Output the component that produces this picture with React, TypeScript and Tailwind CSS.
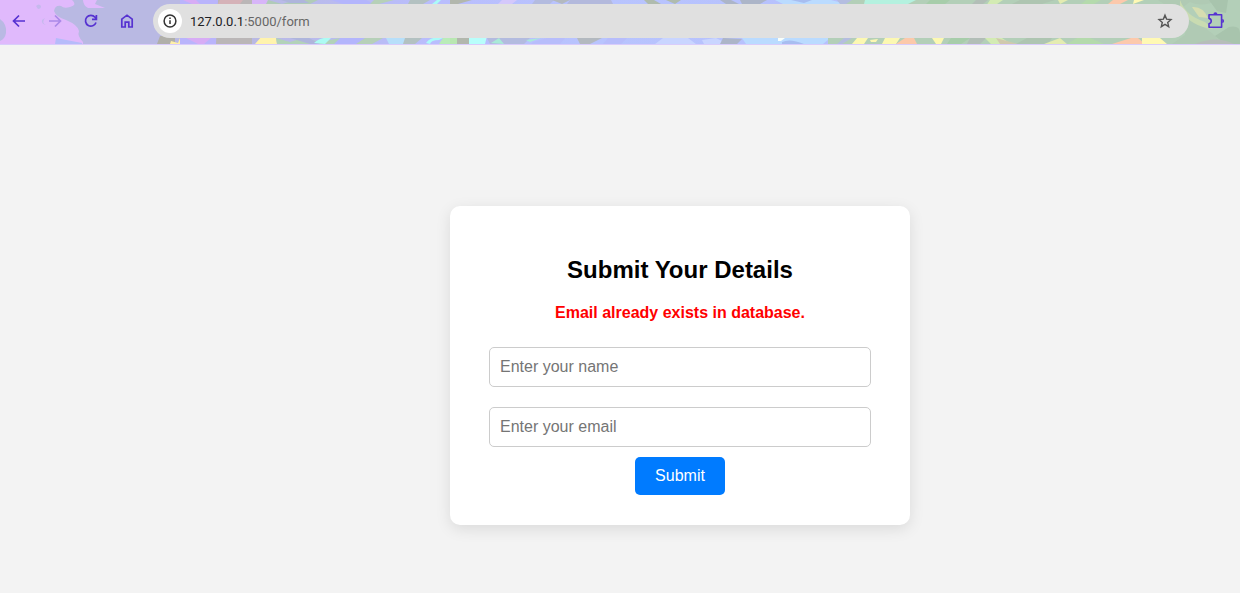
import React from "react";

type Shape = { d: string; fill: string };

// Shapes of the decorative toolbar theme, drawn on a 1240 x 44 canvas.
const themeShapes: Shape[] = [
  // lilac area on the left
  { d: "M0 0H72Q78 5 70 7Q64 9 61 6Q55 5 54 11Q56 17 66 20Q78 25 79 31Q77 36 83 42V44H0Z", fill: "#e0b9fc" },
  { d: "M0 19Q7 24 6 33Q5 39 0 41Z", fill: "#b9b9e3" },
  { d: "M56 38L82 43V44H55Z", fill: "#b6bbfa" },
  { d: "M36 6Q39 3 41 6Q41 9 38 9ZM45 18Q41 23 46 25Q41 24 42 20Z", fill: "#c6b9ed" },
  { d: "M83 0H97L95 4L105 8H88Q83 5 83 0Z", fill: "#e0b9fc" },
  // left part of the strips
  { d: "M160 36H175V44H157Z", fill: "#b0afa9" },
  { d: "M171 41L178 43L180 38V44H170Z", fill: "#fff0a8" },
  { d: "M180 0H218V4H180ZM180 38H220V44H180Z", fill: "#b9b4fb" },
  { d: "M183 0L192 4H200L196 0ZM186 38L198 44H204L211 38Z", fill: "#d7acf5" },
  { d: "M218 0H252V44H216Z", fill: "#bab6b7" },
  { d: "M220 0H243L240 4H218Z", fill: "#d5b2b8" },
  { d: "M252 0H268V4H252Z", fill: "#d7b5f8" },
  { d: "M262 36H276L277 44H255Z", fill: "#fff3ad" },
  { d: "M268 0L282 4L296 0H318L310 4H266Z", fill: "#b0cbb8" },
  { d: "M276 38L290 42L303 38L321 42L340 38V44H277Z", fill: "#b2d2b9" },
  { d: "M281 0L290 3H309L304 0ZM290 38L310 44H320L309 38Z", fill: "#aeb5dc" },
  { d: "M314 43Q320 37 331 38L325 44Z", fill: "#acfbf3" },
  { d: "M331 0L343 4H374L366 0ZM340 38H380L370 44H334Z", fill: "#b3b5fc" },
  { d: "M374 0H394L379 4H370ZM365 38H383L372 44H356Z", fill: "#b6d0b8" },
  { d: "M386 38H407L404 44H389Z", fill: "#b7dffa" },
  { d: "M410 0H430L423 4H408ZM405 38H422L415 44H403Z", fill: "#b3c1c1" },
  { d: "M437 0H441L437 4H432ZM426 43Q431 36 443 38L439 40Q431 40 430 44Z", fill: "#abfaf8" },
  { d: "M443 38H453L450 44H439Z", fill: "#b9ecb8" },
  // centre strips
  { d: "M450 38H457V44H450Z", fill: "#b9e7b2" },
  { d: "M450 0H472L458 4H450ZM457 38H469V44H457Z", fill: "#b2b7ad" },
  { d: "M469 36H487L485 44H469Z", fill: "#b8fefb" },
  { d: "M502 0H517L512 4H498Z", fill: "#d4c8fb" },
  { d: "M535 0H554L550 4H532ZM487 38H530L524 44H490Z", fill: "#b3bbdf" },
  { d: "M491 43L499 38L504 44ZM526 40L541 38L530 42Z", fill: "#a9ead8" },
  { d: "M552 0L562 4L570 0ZM577 38H602L590 44H580Z", fill: "#b3b9bf" },
  { d: "M570 0H611L613 4H567Z", fill: "#b3b9dc" },
  { d: "M644 0H654L661 4H648ZM666 0H681L675 4Z", fill: "#afbbae" },
  { d: "M533 42L547 38H565L560 44H531ZM603 44L608 38H627L621 44Z", fill: "#b7bdfb" },
  { d: "M663 38H688L696 44H655ZM702 40L716 38L728 44H704Z", fill: "#c9d5ff" },
  { d: "M720 0L726 4H739L731 0ZM740 0H767L760 4H742ZM723 38L742 39L737 44H720Z", fill: "#acb5c8" },
  // blue to green transition
  { d: "M775 0H831L846 4H783ZM742 38H830L823 44H746Z", fill: "#badbff" },
  { d: "M782 42Q790 38 804 44H782ZM791 0L804 3L812 0Z", fill: "#a7bdf0" },
  { d: "M778 38H785L781 41H778Z", fill: "#f9fffb" },
  { d: "M845 0H1240V44H828V4H844Z", fill: "#b3cfb8" },
  { d: "M865 0H916L908 4H864Z", fill: "#b4f1df" },
  { d: "M857 38H868L864 44H852ZM870 40L878 39L876 42H871ZM885 38H900L896 44H882ZM932 38H944L941 44H936Z", fill: "#fcf8b2" },
  { d: "M905 38H914L917 44H896Z", fill: "#fcc9aa" },
  { d: "M837 0H852L846 4H840ZM844 38H852L842 44H837Z", fill: "#b4bde0" },
  { d: "M930 0H950L945 4H926ZM951 38H970L961 44H947Z", fill: "#a7cdaa" },
  { d: "M976 0H988L983 4H972ZM970 38H986L980 44H967Z", fill: "#b2beb7" },
  // green area on the right
  { d: "M990 0H1003L994 6H986ZM985 38H1002L1011 44H991Z", fill: "#d3ebb3" },
  { d: "M996 38L1018 44H1000Z", fill: "#d0c9ad" },
  { d: "M1020 0H1055L1042 4H1012ZM1027 38H1052L1048 44H1016Z", fill: "#aec5b1" },
  { d: "M1058 0H1068L1060 4ZM1060 38L1044 44H1067Z", fill: "#e4ecb1" },
  { d: "M1113 0H1128L1120 4H1108ZM1131 38L1112 44H1145L1138 38Z", fill: "#fcc9ac" },
  { d: "M1134 0H1144L1133 4ZM1142 38H1160L1167 44H1142Z", fill: "#fff9b4" },
  { d: "M1086 0H1101L1094 4H1081ZM1077 38H1090L1104 44H1067Z", fill: "#b4daac" },
  { d: "M1158 0H1218Q1202 8 1190 2L1180 9L1164 4ZM1188 13Q1204 28 1213 34L1223 44H1172L1185 35Z", fill: "#b0cab4" },
  { d: "M1180 0Q1186 16 1205 22L1213 29Q1192 27 1180 10Z", fill: "#c9dbb1" },
  { d: "M1192 7Q1203 6 1208 18L1199 17Z", fill: "#d6ddb0" },
  { d: "M1209 0H1228L1226 13L1217 11ZM1229 27Q1240 25 1240 33V44H1225L1215 36Z", fill: "#a8c4ad" },
  { d: "M1195 44Q1217 35 1234 44Z", fill: "#b6bdb9" },
];

function ThemeBackdrop() {
  return (
    <svg aria-hidden="true" className="absolute inset-0 h-full w-full" viewBox="0 0 1240 44" preserveAspectRatio="none">
      <defs>
        <linearGradient id="theme-base" x1="0" x2="1">
          <stop offset="0" stopColor="#b9b9e3" />
          <stop offset="0.2" stopColor="#b9b9e3" />
          <stop offset="0.35" stopColor="#b9bdfd" />
          <stop offset="0.48" stopColor="#b8c4fe" />
          <stop offset="1" stopColor="#b4bbfa" />
        </linearGradient>
      </defs>
      <rect width="1240" height="44" fill="url(#theme-base)" />
      {themeShapes.map((shape, index) => (
        <path key={index} d={shape.d} fill={shape.fill} />
      ))}
    </svg>
  );
}

function Icon({ children }: { children: React.ReactNode }) {
  return (
    <svg aria-hidden="true" className="size-4" viewBox="0 0 16 16" fill="none" stroke="currentColor" strokeWidth="1.7">
      {children}
    </svg>
  );
}

const toolButton = "flex size-5 shrink-0 items-center justify-center text-[#5632d1]";

function BrowserBar() {
  return (
    <header className="relative flex h-[45px] items-center border-b border-[#d9ccfb] pb-[2px] pl-[9px] pr-[14px]">
      <ThemeBackdrop />
      <nav aria-label="Browser navigation" className="relative mr-4 flex items-center gap-4">
        <button type="button" aria-label="Back" className={toolButton}>
          <Icon><path d="M14 8H3M8 2.5L2.5 8L8 13.5" /></Icon>
        </button>
        <button type="button" aria-label="Forward" disabled className="flex size-5 shrink-0 items-center justify-center text-[#ab89e8]">
          <Icon><path d="M2 8H13M8 2.5L13.5 8L8 13.5" /></Icon>
        </button>
        <button type="button" aria-label="Reload" className={toolButton}>
          <Icon><path d="M13 9.5A5.4 5.4 0 1 1 12 4.2L13.6 6M13.4 2V6.4H9" /></Icon>
        </button>
        <button type="button" aria-label="Home" className={toolButton}>
          <Icon><path d="M2.8 6.2L8 2.2L13.2 6.2V14H9.8V9.2H6.2V14H2.8Z" /></Icon>
        </button>
      </nav>
      <div className="relative flex h-[34px] min-w-0 flex-1 items-center rounded-full bg-[#e0e0e0] pl-[5px] pr-4">
        <button type="button" aria-label="Site information" className="flex size-6 shrink-0 items-center justify-center rounded-full bg-white text-[#333333]">
          <svg aria-hidden="true" className="size-4" viewBox="0 0 16 16" fill="none" stroke="currentColor" strokeWidth="1.5">
            <circle cx="8" cy="8" r="5.9" />
            <path d="M8 7.2V11M8 4.6V6" />
          </svg>
        </button>
        <a href="http://127.0.0.1:5000/form" className="ml-2 min-w-0 flex-1 truncate pt-px font-['Roboto',sans-serif] text-[13px] leading-5 text-[#666666]">
          <span className="text-[#202124]">127.0.0.1</span>:5000/form
        </a>
        <button type="button" aria-label="Bookmark this page" className="flex size-4 shrink-0 items-center justify-center text-[#555555]">
          <svg aria-hidden="true" className="size-4" viewBox="0 0 16 16" fill="none" stroke="currentColor" strokeWidth="1.4">
            <path d="M8 2.2L9.6 6.1L14 6.5L10.7 9.4L11.7 13.7L8 11.4L4.3 13.7L5.3 9.4L2 6.5L6.4 6.1Z" />
          </svg>
        </button>
      </div>
      <button type="button" aria-label="Extensions" className="relative ml-[17px] flex size-5 shrink-0 items-center justify-center text-[#5632d1]">
        <svg aria-hidden="true" className="size-5" viewBox="0 0 20 20" fill="none" stroke="currentColor" strokeWidth="1.6">
          <path d="M3 3.8H15.6V16.2H3V12.8C6 12.2 6 8 3 7.4Z" strokeLinejoin="round" />
          <path d="M7.4 3.2A2 1.9 0 0 1 11.4 3.2ZM16.2 8A1.9 2 0 0 1 16.2 12Z" fill="currentColor" stroke="none" />
        </svg>
      </button>
    </header>
  );
}

const fieldClass =
  "block h-10 w-full rounded-[5px] border border-[#cccccc] bg-white px-[10px] text-base text-black placeholder:text-[#757575]";

export default function App() {
  return (
    <div className="flex min-h-screen flex-col bg-[#f3f3f3] font-['Liberation_Sans',Arial,sans-serif]">
      <BrowserBar />
      <main className="flex flex-1 items-start justify-center pb-16 pl-[120px] pt-[161px]">
        <form
          className="flex w-full max-w-[460px] flex-col items-center rounded-[10px] bg-white px-[39px] pb-[30px] pt-[50px] shadow-[0_4px_15px_rgba(0,0,0,0.1)]"
          onSubmit={(event) => event.preventDefault()}
        >
          <h2 className="text-2xl font-bold leading-7 text-black">Submit Your Details</h2>
          <p role="alert" className="mt-[17px] text-base font-bold leading-6 text-[#ff0000]">
            Email already exists in database.
          </p>
          <div className="mt-[22px] flex w-full flex-col gap-5">
            <input type="text" name="name" aria-label="Name" placeholder="Enter your name" className={fieldClass} />
            <input type="email" name="email" aria-label="Email" placeholder="Enter your email" className={fieldClass} />
          </div>
          <button type="submit" className="mt-[10px] h-[38px] rounded-[5px] bg-[#007bff] px-5 text-base text-white">
            Submit
          </button>
        </form>
      </main>
    </div>
  );
}
